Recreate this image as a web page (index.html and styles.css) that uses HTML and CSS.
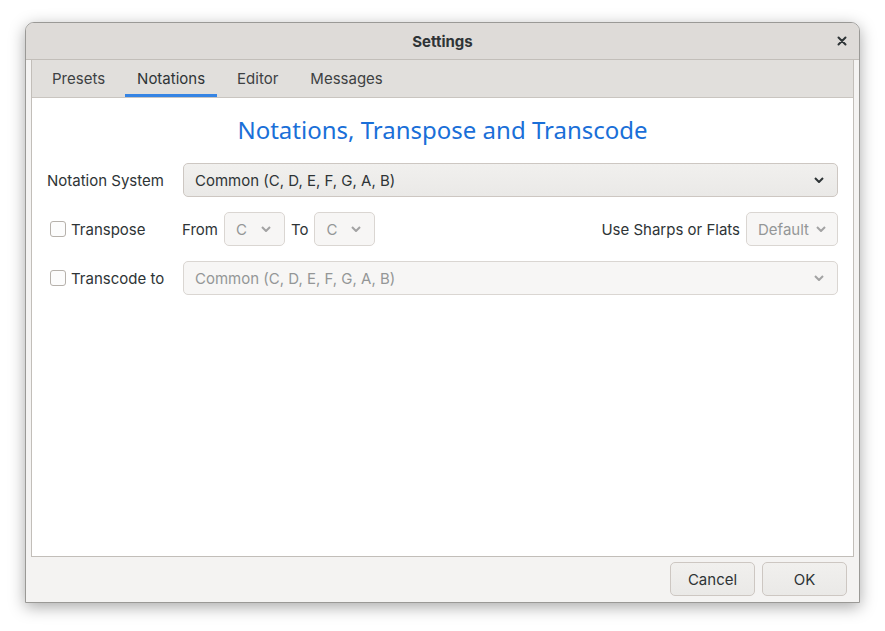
FILE: index.html
```html
<!DOCTYPE html>
<html>
<head>
<meta charset="utf-8">
<link rel="stylesheet" href="styles.css">
</head>
<body>
<div class="stage">
  <div class="window">
    <div class="titlebar">
      <span class="title">Settings</span>
      <span class="close">
        <svg width="10" height="10" viewBox="0 0 10 10"><path d="M1.5 1.5 L8.5 8.5 M8.5 1.5 L1.5 8.5" stroke="#2e3436" stroke-width="2" stroke-linecap="round"/></svg>
      </span>
    </div>
    <div class="body">
      <div class="notebook">
        <div class="tabs">
          <div class="tab">Presets</div>
          <div class="tab active">Notations</div>
          <div class="tab">Editor</div>
          <div class="tab">Messages</div>
        </div>
        <div class="page">
          <h1 class="heading">Notations, Transpose and Transcode</h1>
          <div class="form">
            <div class="label">Notation System</div>
            <div class="combo wide">
              <span>Common (C, D, E, F, G, A, B)</span>
              <svg class="chev" width="10" height="6" viewBox="0 0 10 6"><path d="M1 1 L5 5 L9 1" fill="none" stroke="#2e3436" stroke-width="2" stroke-linejoin="round"/></svg>
            </div>

            <label class="check"><span class="box"></span>Transpose</label>
            <div class="inline">
              <span class="txt">From</span>
              <div class="combo small disabled">
                <span>C</span>
                <svg class="chev" width="10" height="6" viewBox="0 0 10 6"><path d="M1 1 L5 5 L9 1" fill="none" stroke="#a3a3a3" stroke-width="2" stroke-linejoin="round"/></svg>
              </div>
              <span class="txt">To</span>
              <div class="combo small disabled">
                <span>C</span>
                <svg class="chev" width="10" height="6" viewBox="0 0 10 6"><path d="M1 1 L5 5 L9 1" fill="none" stroke="#a3a3a3" stroke-width="2" stroke-linejoin="round"/></svg>
              </div>
              <span class="spacer"></span>
              <span class="txt">Use Sharps or Flats</span>
              <div class="combo def disabled">
                <span>Default</span>
                <svg class="chev" width="10" height="6" viewBox="0 0 10 6"><path d="M1 1 L5 5 L9 1" fill="none" stroke="#a3a3a3" stroke-width="2" stroke-linejoin="round"/></svg>
              </div>
            </div>

            <label class="check"><span class="box"></span>Transcode to</label>
            <div class="combo wide disabled">
              <span>Common (C, D, E, F, G, A, B)</span>
              <svg class="chev" width="10" height="6" viewBox="0 0 10 6"><path d="M1 1 L5 5 L9 1" fill="none" stroke="#a3a3a3" stroke-width="2" stroke-linejoin="round"/></svg>
            </div>
          </div>
        </div>
      </div>
      <div class="footer">
        <button class="btn">Cancel</button>
        <button class="btn">OK</button>
      </div>
    </div>
  </div>
</div>
</body>
</html>
```
FILE: styles.css
```css
html, body {
  margin: 0;
  padding: 0;
  background: #ffffff;
  height: 100%;
}
body {
  font-family: Inter, "Noto Sans", sans-serif;
  font-size: 15px;
  color: #2e3436;
}
.stage {
  padding: 22px 0 0 25px;
  height: 100%;
  box-sizing: border-box;
}
.window {
  box-sizing: border-box;
  width: 835px;
  height: 581px;
  border: 1px solid #9a9996;
  border-radius: 9px 9px 0 0;
  background: #f4f3f2;
  box-shadow: 0 4px 16px rgba(0, 0, 0, 0.34);
  display: flex;
  flex-direction: column;
  overflow: hidden;
}
.titlebar {
  height: 36px;
  flex: none;
  background: #dedbd8;
  border-bottom: 1px solid #c2beb9;
  display: flex;
  align-items: center;
  justify-content: center;
  position: relative;
}
.title {
  font-weight: 700;
  font-size: 15px;
  color: #2e3436;
}
.close {
  position: absolute;
  right: 12px;
  top: 13px;
  width: 10px;
  height: 10px;
  display: flex;
}
.body {
  flex: 1;
  display: flex;
  flex-direction: column;
  padding: 0 5px;
}
.notebook {
  flex: 1;
  display: flex;
  flex-direction: column;
  border: 1px solid #c2beb9;
  border-top: none;
}
.tabs {
  height: 37px;
  flex: none;
  background: #e1dfdc;
  border-bottom: 1px solid #c9c5c0;
  display: flex;
  gap: 8px;
  padding-left: 8px;
}
.tab {
  padding: 0 12px;
  display: flex;
  align-items: center;
  color: #3d4143;
  box-sizing: border-box;
  border-bottom: 3px solid transparent;
  padding-top: 3px;
}
.tab.active {
  border-bottom-color: #3584e4;
  color: #2e3436;
}
.page {
  flex: 1;
  background: #ffffff;
  padding: 0 15px;
}
.heading {
  margin: 0;
  padding-top: 16px;
  height: 48px;
  box-sizing: border-box;
  text-align: center;
  font-family: "Noto Sans", "Open Sans", sans-serif;
  font-weight: 400;
  font-size: 24px;
  line-height: 32px;
  color: #1a6fd8;
}
.form {
  margin-top: 17px;
  display: grid;
  grid-template-columns: 136px 1fr;
  row-gap: 15px;
  align-items: center;
}
.label {
  white-space: nowrap;
}
.check {
  display: flex;
  align-items: center;
  gap: 5px;
  padding-left: 3px;
  white-space: nowrap;
}
.box {
  width: 14px;
  height: 14px;
  border: 1px solid #b6b1ab;
  border-radius: 3px;
  background: #fcfcfc;
  flex: none;
}
.combo {
  box-sizing: border-box;
  height: 34px;
  border: 1px solid #cdc7c2;
  border-radius: 5px;
  background: linear-gradient(#f1f0ee, #eae9e7);
  display: flex;
  align-items: center;
  justify-content: space-between;
  padding: 0 13px 0 11px;
  white-space: nowrap;
}
.combo.disabled {
  background: #f7f6f5;
  border-color: #dad6d2;
  color: #949697;
}
.combo.small {
  width: 61px;
}
.combo.def {
  width: 92px;
  padding: 0 11px 0 11px;
}
.inline {
  display: flex;
  align-items: center;
  gap: 6px;
  margin-left: -1px;
}
.inline .txt {
  white-space: nowrap;
}
.spacer {
  flex: 1;
}
.chev {
  flex: none;
}
.footer {
  height: 45px;
  flex: none;
  display: flex;
  justify-content: flex-end;
  align-items: flex-start;
  gap: 7px;
  padding: 5px 7px 0 0;
  box-sizing: border-box;
}
.btn {
  font-family: Inter, "Noto Sans", sans-serif;
  font-size: 15px;
  color: #2e3436;
  height: 34px;
  width: 85px;
  border: 1px solid #cdc7c2;
  border-radius: 5px;
  background: linear-gradient(#f1f0ee, #eae9e7);
  padding: 0;
}
```
